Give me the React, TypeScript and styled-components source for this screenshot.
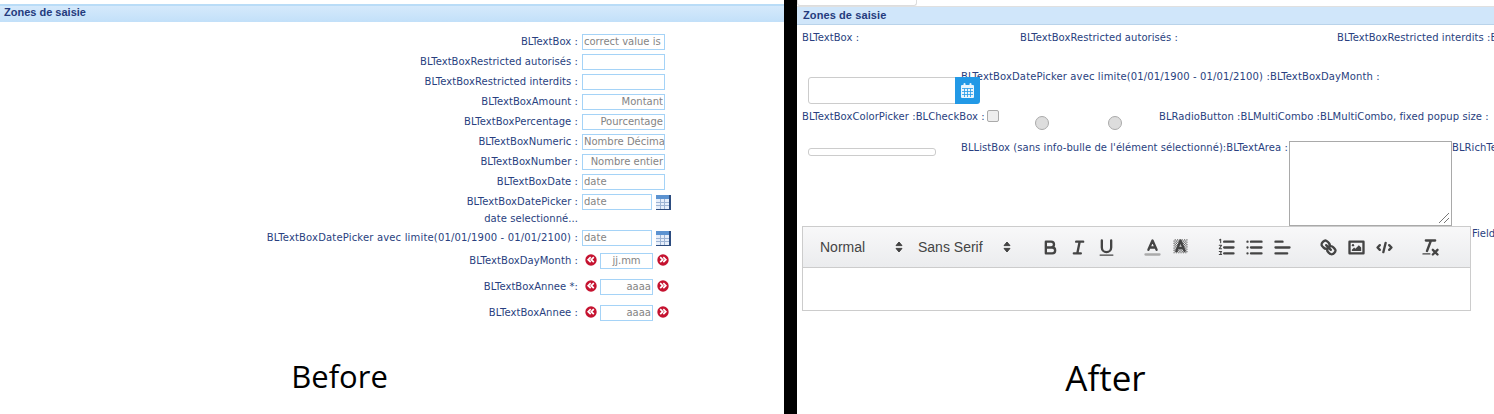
import React from 'react';
import styled, { createGlobalStyle } from 'styled-components';

const GlobalStyle = createGlobalStyle`
  html, body {
    margin: 0;
    padding: 0;
    background: #fff;
  }
  body {
    width: 1494px;
    height: 414px;
    overflow: hidden;
    font-family: 'DejaVu Sans', Verdana, sans-serif;
    font-size: 10px;
    color: #293f80;
  }
`;

const Page = styled.div`
  display: flex;
  width: 1494px;
  height: 414px;
  overflow: hidden;
`;

const BeforePanel = styled.section`
  display: flex;
  flex-direction: column;
  width: 784px;
  flex: none;
  padding-top: 4px;
  box-sizing: border-box;
`;

const Divider = styled.div`
  width: 13px;
  flex: none;
  background: #000;
`;

const AfterPanel = styled.section`
  display: flex;
  flex-direction: column;
  width: 697px;
  flex: none;
  overflow: hidden;
`;

const BeforeHeader = styled.h2`
  margin: 0;
  height: 18px;
  box-sizing: border-box;
  padding: 0 0 0 4px;
  border-top: 2px solid #b9dcf7;
  background: linear-gradient(#d5e9fb, #c2e0f9);
  font: bold 11px/12px 'Liberation Sans', Arial, sans-serif;
  color: #243b7d;
`;

const BeforeForm = styled.div`
  display: flex;
  flex-direction: column;
  padding-top: 10px;
`;

const Row = styled.div<{ $height?: number }>`
  display: grid;
  grid-template-columns: 578px auto;
  column-gap: 4px;
  align-items: center;
  height: ${(p) => p.$height ?? 20}px;
`;

const Label = styled.span<{ $spacing?: number }>`
  text-align: right;
  white-space: nowrap;
  line-height: 12px;
  letter-spacing: ${(p) => p.$spacing ?? 0.06}px;
`;

const Note = styled.div`
  height: 16px;
  width: 578px;
  padding-top: 1px;
  box-sizing: border-box;
  text-align: right;
  line-height: 12px;
  letter-spacing: 0.06px;
`;

const Fields = styled.div`
  display: flex;
  align-items: center;
`;

const Input = styled.div<{ $width?: number; $right?: boolean; $center?: boolean }>`
  width: ${(p) => p.$width ?? 83}px;
  height: 16px;
  box-sizing: border-box;
  border: 1px solid #a5d3f7;
  padding: 0 1px;
  overflow: hidden;
  white-space: nowrap;
  line-height: 14px;
  color: #848484;
  text-align: ${(p) => (p.$center ? 'center' : p.$right ? 'right' : 'left')};
`;

const CalendarSlot = styled.span`
  display: flex;
  margin-left: 4px;
`;

const RedBtn = styled.span<{ $side: 'left' | 'right' }>`
  display: flex;
  margin: ${(p) => (p.$side === 'left' ? '-2px 3px 0 3px' : '-2px 0 0 4px')};
`;

const BeforeCaption = styled.div`
  display: flex;
  justify-content: center;
  margin-top: 30px;
  padding-right: 105px;
  font: 31px/40px 'Open Sans', sans-serif;
  color: #000;
`;

const AfterCaption = styled.div`
  display: flex;
  justify-content: center;
  margin-top: 47px;
  padding-right: 80px;
  font: 35px/40px 'Open Sans', sans-serif;
  color: #000;
`;

const ClippedInput = styled.div`
  width: 120px;
  height: 6px;
  flex: none;
  box-sizing: border-box;
  border: 1px solid #ddd;
  border-top: 0;
  border-radius: 0 0 3px 3px;
`;

const AfterHeader = styled.h2`
  margin: 0;
  height: 19px;
  flex: none;
  box-sizing: border-box;
  padding: 1px 0 0 6px;
  border-top: 1px solid #e0e0e0;
  border-bottom: 1px solid #b9d3ea;
  background: #d0e6fa;
  font: bold 11px/14px 'Liberation Sans', Arial, sans-serif;
  letter-spacing: 0.1px;
  color: #243b7d;
`;

const FlowRow = styled.div<{ $height: number }>`
  display: flex;
  height: ${(p) => p.$height}px;
  flex: none;
  box-sizing: border-box;
  white-space: nowrap;
`;

const FlowText = styled.span<{ $width?: number; $top?: number; $left?: number; $spacing?: number }>`
  flex: none;
  ${(p) => (p.$width ? `width: ${p.$width}px;` : '')}
  margin-top: ${(p) => p.$top ?? 0}px;
  margin-left: ${(p) => p.$left ?? 0}px;
  line-height: 12px;
  white-space: nowrap;
  letter-spacing: ${(p) => p.$spacing ?? 0.06}px;
`;

const FirstRow = styled(FlowRow)`
  padding: 7px 0 0 5px;
`;

const DateRow = styled(FlowRow)`
  padding-left: 11px;
`;

const DateGroup = styled.div`
  position: relative;
  width: 153px;
  height: 27px;
  flex: none;
`;

const DateInput = styled.div`
  width: 148px;
  height: 27px;
  box-sizing: border-box;
  border: 1px solid #ccc;
  border-radius: 3px 0 0 3px;
`;

const DateButton = styled.span`
  position: absolute;
  left: 147px;
  top: 0;
  width: 25px;
  height: 27px;
  display: flex;
  align-items: center;
  justify-content: center;
  background: #2299e6;
  border-radius: 0 0 3px 0;
`;

const CheckRow = styled(FlowRow)`
  padding: 1px 0 0 5px;
`;

const Checkbox = styled.span`
  flex: none;
  width: 12px;
  height: 12px;
  margin: -1px 0 0 1px;
  box-sizing: border-box;
  background: #eee;
  border: 1px solid #aaa;
  border-radius: 2px;
`;

const Radio = styled.span<{ $left: number }>`
  flex: none;
  width: 14px;
  height: 14px;
  margin: 5px 0 0 ${(p) => p.$left}px;
  box-sizing: border-box;
  background: #ddd;
  border: 1px solid #aaa;
  border-radius: 50%;
`;

const ListRow = styled(FlowRow)`
  padding-left: 11px;
`;

const ListBox = styled.div`
  flex: none;
  width: 128px;
  height: 8px;
  margin: 7px 25px 0 0;
  box-sizing: border-box;
  border: 1px solid #ccc;
  border-radius: 3px;
`;

const TextArea = styled.div`
  position: relative;
  flex: none;
  width: 163px;
  height: 85px;
  box-sizing: border-box;
  border: 1px solid #a9a9a9;
`;

const Grip = styled.svg`
  position: absolute;
  right: 1px;
  bottom: 1px;
`;

const EditorRow = styled.div`
  display: flex;
  flex: none;
  padding-left: 5px;
`;

const Editor = styled.div`
  flex: none;
  width: 669px;
  height: 85px;
  display: flex;
  flex-direction: column;
  box-sizing: border-box;
  border: 1px solid #ccc;
`;

const Toolbar = styled.div`
  height: 41px;
  flex: none;
  display: flex;
  align-items: center;
  box-sizing: border-box;
  padding-left: 9px;
  border-bottom: 1px solid #ccc;
  background: linear-gradient(#f8f8f9, #ebecee);
`;

const Picker = styled.div<{ $width: number }>`
  width: ${(p) => p.$width}px;
  flex: none;
  display: flex;
  align-items: center;
  justify-content: space-between;
  box-sizing: border-box;
  padding: 0 2px 0 8px;
  font: 14px/24px 'Liberation Sans', Arial, sans-serif;
  color: #444;
`;

const ToolGroup = styled.div`
  display: flex;
  margin-left: 18px;
`;

const ToolButton = styled.span`
  width: 28px;
  height: 24px;
  display: flex;
  align-items: center;
  justify-content: center;
`;

const IconSvg = styled.svg`
  width: 21px;
  height: 21px;
  fill: none;
  stroke: #444;
  stroke-width: 2;
  stroke-linecap: round;
  stroke-linejoin: round;
`;

const FieldLabel = styled.span`
  flex: none;
  margin: 2px 0 0 1px;
  line-height: 12px;
`;

const BlockFill = styled.g`
  fill: #444;
  stroke: none;
`;

function TableIcon(): JSX.Element {
  return (
    <svg width="15" height="15" viewBox="0 0 15 15">
      <rect x="0" y="0" width="15" height="15" fill="#2d4d80" />
      <rect x="0" y="0" width="13" height="4" fill="#5c93d1" />
      <rect x="0" y="4" width="13" height="10" fill="#e6eefa" />
      <path d="M4.5 4v10M8.5 4v10M0 7.5h13M0 10.5h13" stroke="#9db4d4" fill="none" />
    </svg>
  );
}

function RoundArrow({ dir }: { dir: 'left' | 'right' }): JSX.Element {
  const d = dir === 'left' ? 'M5.7 3.2 3.2 5.7 5.7 8.2M8.8 3.2 6.3 5.7 8.8 8.2' : 'M3.2 3.2 5.7 5.7 3.2 8.2M6.3 3.2 8.8 5.7 6.3 8.2';
  return (
    <svg width="12" height="12" viewBox="0 0 12 12">
      <circle cx="6" cy="6" r="5.7" fill="#c5122f" />
      <path d={d} fill="none" stroke="#fff" strokeWidth="1.7" />
    </svg>
  );
}

function CalendarGlyph(): JSX.Element {
  return (
    <svg width="13" height="15" viewBox="0 0 13 15">
      <rect x="0" y="2" width="13" height="13" rx="1" fill="#e9f5fd" />
      <rect x="2.5" y="0" width="2" height="4" rx="1" fill="#e9f5fd" />
      <rect x="8.5" y="0" width="2" height="4" rx="1" fill="#e9f5fd" />
      <path d="M1 5.5h11M1 8.5h11M1 11.5h11M3.5 5.5v8.5M6.5 5.5v8.5M9.5 5.5v8.5" stroke="#2299e6" strokeWidth="0.8" />
    </svg>
  );
}

function PickerArrows(): JSX.Element {
  return (
    <svg width="18" height="18" viewBox="0 0 18 18">
      <path d="M6 7.6 9 4 12 7.6ZM6 10.4 9 14 12 10.4Z" fill="#444" stroke="#444" strokeLinejoin="round" />
    </svg>
  );
}

function Icon({ children }: { children: React.ReactNode }): JSX.Element {
  return (
    <ToolButton>
      <IconSvg viewBox="0 0 18 18">{children}</IconSvg>
    </ToolButton>
  );
}

const hatchRows = [2.5, 3.5, 4.5, 5.5, 6.5, 7.5, 8.5, 9.5, 10.5, 11.5, 12.5, 13.5];

const beforeRows = [
  { label: 'BLTextBox :', value: 'correct value is' },
  { label: 'BLTextBoxRestricted autorisés :', value: '' },
  { label: 'BLTextBoxRestricted interdits :', value: '' },
  { label: 'BLTextBoxAmount :', value: 'Montant', right: true },
  { label: 'BLTextBoxPercentage :', value: 'Pourcentage', right: true },
  { label: 'BLTextBoxNumeric :', value: 'Nombre Décimal' },
  { label: 'BLTextBoxNumber :', value: 'Nombre entier', right: true },
  { label: 'BLTextBoxDate :', value: 'date' },
];

const spinRows = [
  { label: 'BLTextBoxDayMonth :', value: 'jj.mm', center: true },
  { label: 'BLTextBoxAnnee *:', value: 'aaaa', right: true },
  { label: 'BLTextBoxAnnee :', value: 'aaaa', right: true },
];

function App(): JSX.Element {
  return (
    <Page>
      <GlobalStyle />
      <BeforePanel>
        <BeforeHeader>Zones de saisie</BeforeHeader>
        <BeforeForm>
          {beforeRows.map((row) => (
            <Row key={row.label}>
              <Label>{row.label}</Label>
              <Input $right={row.right}>{row.value}</Input>
            </Row>
          ))}
          <Row>
            <Label>BLTextBoxDatePicker :</Label>
            <Fields>
              <Input $width={70}>date</Input>
              <CalendarSlot>
                <TableIcon />
              </CalendarSlot>
            </Fields>
          </Row>
          <Note>date selectionné...</Note>
          <Row>
            <Label $spacing={0.17}>BLTextBoxDatePicker avec limite(01/01/1900 - 01/01/2100) :</Label>
            <Fields>
              <Input $width={70}>date</Input>
              <CalendarSlot>
                <TableIcon />
              </CalendarSlot>
            </Fields>
          </Row>
          {spinRows.map((row) => (
            <Row key={row.label} $height={26}>
              <Label>{row.label}</Label>
              <Fields>
                <RedBtn $side="left">
                  <RoundArrow dir="left" />
                </RedBtn>
                <Input $width={53} $center={row.center} $right={row.right}>
                  {row.value}
                </Input>
                <RedBtn $side="right">
                  <RoundArrow dir="right" />
                </RedBtn>
              </Fields>
            </Row>
          ))}
        </BeforeForm>
        <BeforeCaption>Before</BeforeCaption>
      </BeforePanel>
      <Divider />
      <AfterPanel>
        <ClippedInput />
        <AfterHeader>Zones de saisie</AfterHeader>
        <FirstRow $height={52}>
          <FlowText $width={218}>BLTextBox :</FlowText>
          <FlowText $width={317}>BLTextBoxRestricted autorisés :</FlowText>
          <FlowText>BLTextBoxRestricted interdits :BLTextBoxAmount :</FlowText>
        </FirstRow>
        <DateRow $height={33}>
          <DateGroup>
            <DateInput />
            <DateButton>
              <CalendarGlyph />
            </DateButton>
          </DateGroup>
          <FlowText $top={-6} $spacing={0.13}>
            BLTextBoxDatePicker avec limite(01/01/1900 - 01/01/2100) :BLTextBoxDayMonth :
          </FlowText>
        </DateRow>
        <CheckRow $height={31}>
          <FlowText $width={184}>BLTextBoxColorPicker :BLCheckBox :</FlowText>
          <Checkbox />
          <Radio $left={36} />
          <Radio $left={59} />
          <FlowText $left={37}>BLRadioButton :BLMultiCombo :BLMultiCombo, fixed popup size :</FlowText>
        </CheckRow>
        <ListRow $height={85}>
          <ListBox />
          <FlowText $top={1} $width={328}>
            BLListBox (sans info-bulle de l'élément sélectionné):BLTextArea :
          </FlowText>
          <TextArea>
            <Grip width="14" height="14" viewBox="0 0 14 14">
              <path d="M3 13 13 3M8 13 13 8" stroke="#777" fill="none" />
            </Grip>
          </TextArea>
          <FlowText $top={1}>BLRichTextBox :</FlowText>
        </ListRow>
        <EditorRow>
          <Editor>
            <Toolbar>
              <Picker $width={98}>
                Normal
                <PickerArrows />
              </Picker>
              <Picker $width={108}>
                Sans Serif
                <PickerArrows />
              </Picker>
              <ToolGroup>
                <Icon>
                  <path d="M5 4h4.5a2.5 2.5 0 0 1 0 5H5ZM5 9h5.5a2.5 2.5 0 0 1 0 5H5Z" />
                </Icon>
                <Icon>
                  <path d="M7 4h6M5 14h6M8 14l2-10" />
                </Icon>
                <Icon>
                  <path d="M5 3v6a4 4 0 0 0 4 4 4 4 0 0 0 4-4V3" />
                  <BlockFill>
                    <rect x="3" y="15" width="12" height="1" rx="0.5" />
                  </BlockFill>
                </Icon>
              </ToolGroup>
              <ToolGroup>
                <Icon>
                  <path d="M3 15h12" stroke="#aaa" />
                  <path d="M5.5 11 9 3l3.5 8M11.6 9H6.4" />
                </Icon>
                <Icon>
                  {hatchRows.map((y, i) => (
                    <line
                      key={y}
                      x1={i % 2 ? 3 : 4}
                      x2="15"
                      y1={y}
                      y2={y}
                      stroke="#666"
                      strokeWidth="1"
                      strokeDasharray="1 1"
                      strokeLinecap="butt"
                    />
                  ))}
                  <path d="M5.5 12 9 3l3.5 9M11.6 9.5H6.4" />
                </Icon>
              </ToolGroup>
              <ToolGroup>
                <Icon>
                  <path d="M7 4h8M7 9h8M7 14h8" />
                  <path d="M3 2.5 4 2v3M2.8 7h2l-2 3h2M2.8 12.5h2l-1 1.2 1 1.3h-2" strokeWidth="0.9" />
                </Icon>
                <Icon>
                  <path d="M6 4h9M6 9h9M6 14h9M3 4h.01M3 9h.01M3 14h.01" />
                </Icon>
                <Icon>
                  <path d="M3 9h12M3 14h10M3 4h6" />
                </Icon>
              </ToolGroup>
              <ToolGroup>
                <Icon>
                  <path d="M7 7l4 4" />
                  <path d="M8.9 4.6a3.5 3.5 0 0 1 .4 4.7 3.5 3.5 0 0 1-4.7-.4C3.2 7.5 2 6.4 4.2 4.2S7.5 3.2 8.9 4.6Z" />
                  <path d="M13.4 9.1a3.5 3.5 0 0 0-4.7-.4 3.5 3.5 0 0 0 .4 4.7c1.4 1.4 2.5 2.5 4.7.4s1-3.3-.4-4.7Z" />
                </Icon>
                <Icon>
                  <rect x="3" y="4" width="12" height="10" />
                  <BlockFill>
                    <circle cx="6" cy="7" r="1" />
                    <path d="M5 12v-1l2-2 1 1 3-3 2 2v3Z" />
                  </BlockFill>
                </Icon>
                <Icon>
                  <path d="M5 7 3 9l2 2M13 7l2 2-2 2M10 5 8 13" />
                </Icon>
              </ToolGroup>
              <ToolGroup>
                <Icon>
                  <path d="M5 3h8M6 12l3.4-9M11 11l4 4M15 11l-4 4" />
                  <BlockFill>
                    <rect x="2" y="14" width="7" height="1" rx="0.5" />
                  </BlockFill>
                </Icon>
              </ToolGroup>
            </Toolbar>
          </Editor>
          <FieldLabel>FieldSet</FieldLabel>
        </EditorRow>
        <AfterCaption>After</AfterCaption>
      </AfterPanel>
    </Page>
  );
}

export default App;
